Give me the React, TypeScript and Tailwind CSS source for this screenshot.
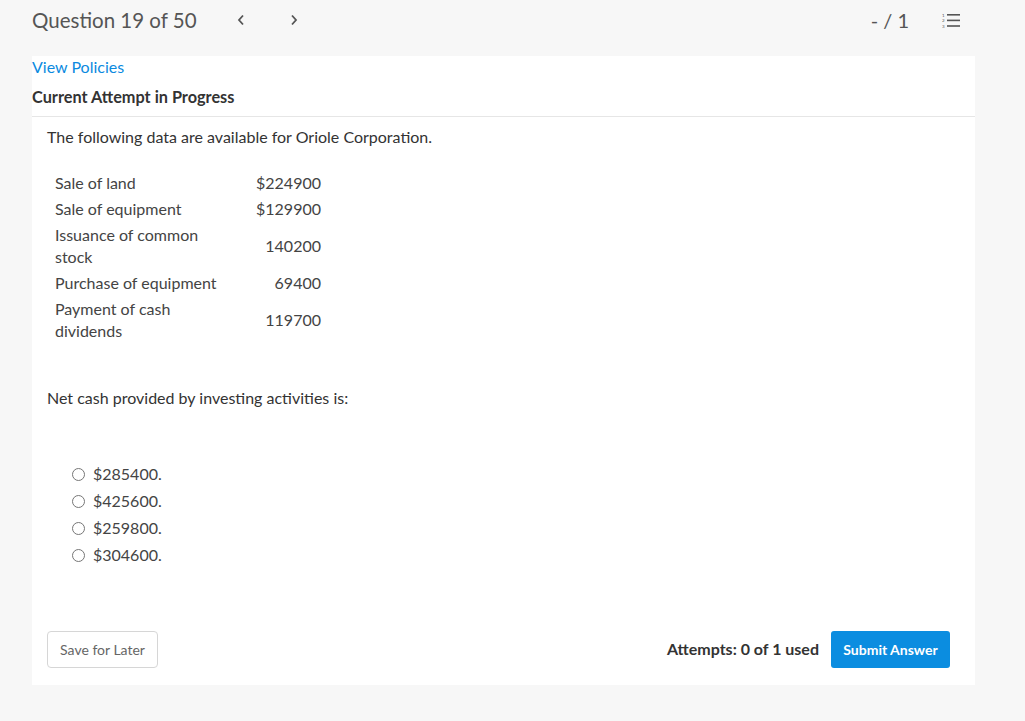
import React from 'react';

const rows = [
  { label: 'Sale of land', value: '$224900' },
  { label: 'Sale of equipment', value: '$129900' },
  { label: 'Issuance of common stock', value: '140200' },
  { label: 'Purchase of equipment', value: '69400' },
  { label: 'Payment of cash dividends', value: '119700' },
];

const choices = ['$285400.', '$425600.', '$259800.', '$304600.'];

const ListIcon = () => (
  <svg width="19" height="17" viewBox="0 0 19 17" className="text-[#555]">
    <text x="0" y="4.5" fontSize="4.5" fill="currentColor" fontFamily="Lato, sans-serif">1</text>
    <text x="0" y="10" fontSize="4.5" fill="currentColor" fontFamily="Lato, sans-serif">2</text>
    <text x="0" y="15.5" fontSize="4.5" fill="currentColor" fontFamily="Lato, sans-serif">3</text>
    <rect x="5" y="2" width="13" height="1.6" fill="currentColor" />
    <rect x="5" y="7.6" width="13" height="1.6" fill="currentColor" />
    <rect x="5" y="13.2" width="13" height="1.6" fill="currentColor" />
  </svg>
);

const Chevron = ({ dir }: { dir: 'left' | 'right' }) => (
  <svg width="8" height="12" viewBox="0 0 8 12" className="text-[#555]">
    <path
      d={dir === 'left' ? 'M6 1.5 L2 6 L6 10.5' : 'M2 1.5 L6 6 L2 10.5'}
      fill="none"
      stroke="currentColor"
      strokeWidth="1.8"
    />
  </svg>
);

export default function App() {
  return (
    <div className="min-h-[721px] bg-[#f7f7f7] font-['Lato',sans-serif] text-[#333]">
      {/* top bar */}
      <div className="flex h-[56px] items-center pl-[32px] pr-[64px]">
        <div className="-mt-[16px] text-[20.5px] text-[#555]">Question 19 of 50</div>
        <div className="-mt-[16px] ml-[40px] flex">
          <Chevron dir="left" />
        </div>
        <div className="-mt-[16px] ml-[45px] flex">
          <Chevron dir="right" />
        </div>
        <div className="-mt-[16px] ml-auto text-[20px] text-[#555]">- / 1</div>
        <div className="-mt-[16px] ml-[33px]">
          <ListIcon />
        </div>
      </div>

      {/* card */}
      <div className="mx-[32px] w-[943px] bg-white">
        <div className="border-b border-[#e6e6e6] pb-[9px]">
          <div className="pt-[1px] text-[16px] leading-[20px] text-[#0b8ae0]">View Policies</div>
          <div className="mt-[10px] text-[16.3px] leading-[20px] font-bold text-[#333]">Current Attempt in Progress</div>
        </div>

        <div className="px-[15px] pt-[10px] text-[16px] text-[#333]">
          <p className="leading-[20px]">The following data are available for Oriole Corporation.</p>

          <table className="mt-[23px] ml-[8px] w-[266px] table-fixed border-collapse text-[16px] text-[#444]">
            <tbody>
              {rows.map((r) => (
                <tr key={r.label}>
                  <td className="w-[180px] py-[2px] pr-[10px] align-middle leading-[22px]">{r.label}</td>
                  <td className="py-[2px] text-right align-middle leading-[22px]">{r.value}</td>
                </tr>
              ))}
            </tbody>
          </table>

          <p className="mt-[44px] leading-[20px]">Net cash provided by investing activities is:</p>

          <div className="mt-[56px] flex flex-col gap-[7px] pl-[25px]">
            {choices.map((c) => (
              <label key={c} className="flex items-center gap-[8px] leading-[20px] text-[#444]">
                <span className="inline-block h-[13px] w-[13px] rounded-full border border-[#767676] bg-white" />
                <span>{c}</span>
              </label>
            ))}
          </div>

          <div className="mt-[66px] flex items-center pb-[17px]">
            <button className="h-[37px] w-[111px] rounded-[4px] border border-[#d6d6d6] bg-white text-[14px] text-[#666]">
              Save for Later
            </button>
            <div className="-mt-[2px] ml-auto text-[16px] font-bold text-[#333]">Attempts: 0 of 1 used</div>
            <button className="ml-[12px] mr-[10px] h-[37px] w-[119px] rounded-[3px] bg-[#0b8de0] text-[14px] font-bold text-white">
              Submit Answer
            </button>
          </div>
        </div>
      </div>
    </div>
  );
}
